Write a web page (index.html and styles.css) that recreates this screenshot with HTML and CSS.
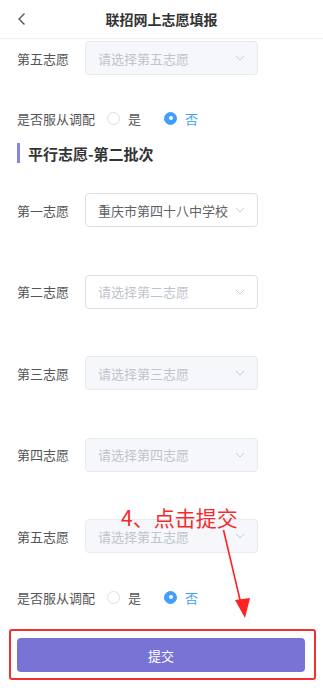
FILE: index.html
```html
<!DOCTYPE html>
<html lang="zh-CN">
<head>
    <meta charset="UTF-8">
    <meta name="viewport" content="width=device-width, initial-scale=1.0">
    <title>联招网上志愿填报</title>
    <link rel="stylesheet" href="styles.css">
</head>
<body>
    <div class="header">
        <span class="back">
            <svg width="12" height="14" viewBox="0 0 12 14"><path d="M8.5 1.5 L3 7 L8.5 12.5" fill="none" stroke="#555" stroke-width="1.4"/></svg>
        </span>
        <h1>联招网上志愿填报</h1>
    </div>

    <div class="form">
        <div class="row first">
            <span class="label">第五志愿</span>
            <div class="select disabled">
                <span>请选择第五志愿</span>
                <svg class="arrow" width="10" height="6" viewBox="0 0 10 6"><path d="M1 1 L5 5 L9 1" fill="none" stroke="#c8cbd2" stroke-width="1"/></svg>
            </div>
        </div>

        <div class="radio-row">
            <span class="label">是否服从调配</span>
            <span class="radio"></span><span class="radio-text">是</span>
            <span class="radio checked"></span><span class="radio-text checked">否</span>
        </div>

        <div class="section-title">平行志愿-第二批次</div>

        <div class="row choice">
            <span class="label">第一志愿</span>
            <div class="select filled">
                <span>重庆市第四十八中学校</span>
                <svg class="arrow" width="10" height="6" viewBox="0 0 10 6"><path d="M1 1 L5 5 L9 1" fill="none" stroke="#c8cbd2" stroke-width="1"/></svg>
            </div>
        </div>

        <div class="row choice">
            <span class="label">第二志愿</span>
            <div class="select">
                <span>请选择第二志愿</span>
                <svg class="arrow" width="10" height="6" viewBox="0 0 10 6"><path d="M1 1 L5 5 L9 1" fill="none" stroke="#c8cbd2" stroke-width="1"/></svg>
            </div>
        </div>

        <div class="row choice">
            <span class="label">第三志愿</span>
            <div class="select disabled">
                <span>请选择第三志愿</span>
                <svg class="arrow" width="10" height="6" viewBox="0 0 10 6"><path d="M1 1 L5 5 L9 1" fill="none" stroke="#c8cbd2" stroke-width="1"/></svg>
            </div>
        </div>

        <div class="row choice">
            <span class="label">第四志愿</span>
            <div class="select disabled">
                <span>请选择第四志愿</span>
                <svg class="arrow" width="10" height="6" viewBox="0 0 10 6"><path d="M1 1 L5 5 L9 1" fill="none" stroke="#c8cbd2" stroke-width="1"/></svg>
            </div>
        </div>

        <div class="row choice">
            <span class="label">第五志愿</span>
            <div class="select disabled">
                <span>请选择第五志愿</span>
                <svg class="arrow" width="10" height="6" viewBox="0 0 10 6"><path d="M1 1 L5 5 L9 1" fill="none" stroke="#c8cbd2" stroke-width="1"/></svg>
            </div>
        </div>

        <div class="radio-row last">
            <span class="label">是否服从调配</span>
            <span class="radio"></span><span class="radio-text">是</span>
            <span class="radio checked"></span><span class="radio-text checked">否</span>
        </div>
    </div>

    <div class="footer">
        <button class="submit-btn">提交</button>
    </div>

    <!-- 标注 -->
    <div class="note">4、点击提交</div>
    <svg class="note-arrow" width="323" height="699" viewBox="0 0 323 699">
        <path d="M223.5 530 L241 604" stroke="#f22" stroke-width="1.6" fill="none"/>
        <polygon points="235,600 250,598 245,618" fill="#f22"/>
    </svg>
    <div class="note-box"></div>
</body>
</html>
```

FILE: styles.css
```css
* {
    margin: 0;
    padding: 0;
    box-sizing: border-box;
}

body {
    font-family: "Noto Sans CJK SC", "Noto Sans", sans-serif;
    background: #fff;
    color: #606266;
    width: 323px;
    height: 699px;
    overflow: hidden;
    position: relative;
}

.header {
    height: 39px;
    display: flex;
    align-items: center;
    justify-content: center;
    position: relative;
    border-bottom: 1px solid #f1f1f3;
    box-shadow: 0 1px 2px rgba(0, 0, 0, 0.03);
}

.header h1 {
    font-size: 14px;
    font-weight: 700;
    color: #333;
}

.back {
    position: absolute;
    left: 16px;
    top: 12px;
    display: flex;
}

.form {
    padding: 0 17px;
}

.row {
    display: flex;
    align-items: center;
    height: 34px;
}

.row.first {
    margin-top: 2px;
}

.row.choice {
    margin-top: 47.5px;
}

.section-title + .row.choice {
    margin-top: 30px;
}

.label {
    width: 68px;
    font-size: 13px;
    color: #555;
    flex-shrink: 0;
}

.select {
    width: 173px;
    height: 34px;
    border: 1px solid #dcdfe6;
    border-radius: 4px;
    background: #fff;
    display: flex;
    align-items: center;
    justify-content: space-between;
    padding: 0 12px 0 12px;
    font-size: 13px;
    color: #c0c4cc;
}

.select.disabled {
    background: #f5f7fa;
    border-color: #e8eaef;
}

.select.filled {
    color: #606266;
}

.radio-row {
    display: flex;
    align-items: center;
    height: 20px;
    margin-top: 33px;
}

.radio-row.last {
    margin-top: 34px;
}

.radio-row .label {
    width: 90px;
}

.radio {
    width: 13px;
    height: 13px;
    border: 1px solid #dcdfe6;
    border-radius: 50%;
    background: #fff;
    margin-right: 8px;
    position: relative;
}

.radio.checked {
    border-color: #409eff;
    background: #409eff;
    margin-left: 23px;
}

.radio.checked::after {
    content: "";
    position: absolute;
    left: 50%;
    top: 50%;
    width: 4px;
    height: 4px;
    margin: -2px 0 0 -2px;
    border-radius: 50%;
    background: #fff;
}

.radio-text {
    font-size: 13px;
    color: #555;
}

.radio-text.checked {
    color: #409eff;
}

.section-title {
    margin-top: 15px;
    height: 20px;
    border-left: 3px solid #8c86d8;
    padding-left: 8px;
    font-size: 15px;
    font-weight: 700;
    color: #333;
    display: flex;
    align-items: center;
}

.footer {
    padding: 31px 18px 0 17px;
}

.submit-btn {
    width: 100%;
    height: 34px;
    border: none;
    border-radius: 4px;
    background: #7873d4;
    color: #fff;
    font-family: inherit;
    font-size: 13px;
}

.note {
    position: absolute;
    left: 121px;
    top: 503px;
    font-size: 21px;
    color: #f42a2a;
    line-height: 28px;
}

.note-arrow {
    position: absolute;
    left: 0;
    top: 0;
}

.note-box {
    position: absolute;
    left: 9px;
    top: 629px;
    width: 307px;
    height: 51px;
    border: 2px solid #f3302e;
    border-radius: 3px;
}
```
